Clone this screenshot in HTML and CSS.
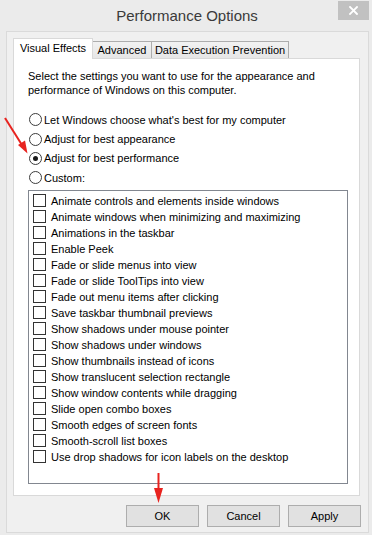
FILE: index.html
```html
<!DOCTYPE html>
<html>
<head>
<meta charset="utf-8">
<link rel="stylesheet" href="styles.css">
</head>
<body>
<div class="window">
  <div class="titlebar">
    <span></span>
    <span class="title">Performance Options</span>
    <button class="close" aria-label="Close">
      <svg width="9" height="9" viewBox="0 0 9 9"><path d="M1 1L8 8M8 1L1 8" stroke="#fff" stroke-width="1.8" stroke-linecap="square"/></svg>
    </button>
  </div>
  <div class="client">
    <div class="tabs">
      <div class="tab active tab-ve">Visual Effects</div>
      <div class="tab tab-adv">Advanced</div>
      <div class="tab tab-dep">Data Execution Prevention</div>
    </div>
    <div class="panel">
      <p class="desc">Select the settings you want to use for the appearance and performance of Windows on this computer.</p>
      <div class="radios">
        <label class="radio"><span class="rb"></span>Let Windows choose what's best for my computer</label>
        <label class="radio"><span class="rb"></span>Adjust for best appearance</label>
        <label class="radio"><span class="rb checked"></span>Adjust for best performance</label>
        <label class="radio"><span class="rb"></span>Custom:</label>
      </div>
      <div class="list">
        <div class="item"><span class="cb"></span>Animate controls and elements inside windows</div>
        <div class="item"><span class="cb"></span>Animate windows when minimizing and maximizing</div>
        <div class="item"><span class="cb"></span>Animations in the taskbar</div>
        <div class="item"><span class="cb"></span>Enable Peek</div>
        <div class="item"><span class="cb"></span>Fade or slide menus into view</div>
        <div class="item"><span class="cb"></span>Fade or slide ToolTips into view</div>
        <div class="item"><span class="cb"></span>Fade out menu items after clicking</div>
        <div class="item"><span class="cb"></span>Save taskbar thumbnail previews</div>
        <div class="item"><span class="cb"></span>Show shadows under mouse pointer</div>
        <div class="item"><span class="cb"></span>Show shadows under windows</div>
        <div class="item"><span class="cb"></span>Show thumbnails instead of icons</div>
        <div class="item"><span class="cb"></span>Show translucent selection rectangle</div>
        <div class="item"><span class="cb"></span>Show window contents while dragging</div>
        <div class="item"><span class="cb"></span>Slide open combo boxes</div>
        <div class="item"><span class="cb"></span>Smooth edges of screen fonts</div>
        <div class="item"><span class="cb"></span>Smooth-scroll list boxes</div>
        <div class="item"><span class="cb"></span>Use drop shadows for icon labels on the desktop</div>
      </div>
    </div>
    <div class="buttons">
      <button class="btn">OK</button>
      <button class="btn">Cancel</button>
      <button class="btn">Apply</button>
    </div>
  </div>
  <svg class="arrows" width="372" height="535" viewBox="0 0 372 535">
    <line x1="5" y1="118" x2="22" y2="145" stroke="#e8231f" stroke-width="2"/>
    <polygon points="27.5,153.5 18,145 25,140.5" fill="#e8231f"/>
    <line x1="158.5" y1="473" x2="158.5" y2="490" stroke="#e8231f" stroke-width="2"/>
    <polygon points="158.5,503 154,488 163,488" fill="#e8231f"/>
  </svg>
</div>
</body>
</html>
```

FILE: styles.css
```css
* { box-sizing: border-box; }
html, body { margin: 0; padding: 0; }
body {
  background: #ebebeb;
  font-family: "Liberation Sans", Arial, sans-serif;
  font-size: 11px;
  color: #000;
}
.window {
  position: relative;
  width: 372px;
  height: 535px;
  display: flex;
  flex-direction: column;
  background: #ebebeb;
  overflow: hidden;
}
.titlebar {
  height: 31px;
  flex: none;
  display: grid;
  grid-template-columns: 1fr auto 1fr;
}
.title {
  font-size: 15px;
  color: #3a3a3a;
  line-height: 31px;
  padding-left: 2px;
}
.close {
  justify-self: end;
  align-self: start;
  margin: 1px 3px 0 0;
  width: 31px;
  height: 19px;
  border: 0;
  padding: 0;
  background: #c1c1c1;
  display: flex;
  align-items: center;
  justify-content: center;
}
.close svg { display: block; }
.client {
  flex: 1;
  margin: 0 3px 2px 6px;
  border: 1px solid #dadada;
  background: #f0f0f0;
  padding: 6px 7px 5px 6px;
  display: flex;
  flex-direction: column;
}
.tabs {
  height: 20px;
  display: flex;
  align-items: flex-end;
}
.tab {
  height: 17px;
  border: 1px solid #adadad;
  border-bottom: 0;
  border-left: 0;
  background: linear-gradient(#f2f2f2, #e6e6e6);
  text-align: center;
  line-height: 16px;
  white-space: nowrap;
}
.tab.active {
  position: relative;
  z-index: 1;
  height: 21px;
  margin-bottom: -1px;
  border: 1px solid #d9d9d9;
  border-bottom: 0;
  background: #fff;
  line-height: 18px;
}
.tab-ve { width: 80px; }
.tab-adv { width: 59px; }
.tab-dep { width: 137px; }
.panel {
  height: 438px;
  margin-right: 1px;
  border: 1px solid #d9d9d9;
  background: #fff;
  padding: 10px 0 0 14px;
}
.desc {
  margin: 0;
  line-height: 14px;
  width: 300px;
}
.radios {
  margin-top: 13px;
  display: flex;
  flex-direction: column;
}
.radio {
  height: 19.4px;
  display: flex;
  align-items: center;
}
.rb {
  width: 13px;
  height: 13px;
  margin: 0 2px 0 1px;
  border: 1px solid #3c3c3c;
  border-radius: 50%;
  background: #fff;
  display: flex;
  align-items: center;
  justify-content: center;
}
.rb.checked::after {
  content: "";
  width: 5px;
  height: 5px;
  border-radius: 50%;
  background: #1a1a1a;
}
.list {
  margin-top: 2px;
  width: 320px;
  height: 294px;
  border: 1px solid #828790;
  padding: 2px 0 0 4px;
}
.item {
  height: 16px;
  display: flex;
  align-items: center;
  white-space: nowrap;
}
.cb {
  width: 13px;
  height: 13px;
  margin-right: 5px;
  border: 1px solid #333;
  background: #fff;
  flex: none;
}
.buttons {
  margin-top: 9px;
  display: flex;
  justify-content: flex-end;
  gap: 8px;
}
.btn {
  width: 73px;
  height: 22px;
  border: 1px solid #adadad;
  background: #e1e1e1;
  font-family: "Liberation Sans", Arial, sans-serif;
  font-size: 11px;
  color: #000;
  padding: 0;
}
.arrows {
  position: absolute;
  left: 0;
  top: 0;
  pointer-events: none;
}
```
